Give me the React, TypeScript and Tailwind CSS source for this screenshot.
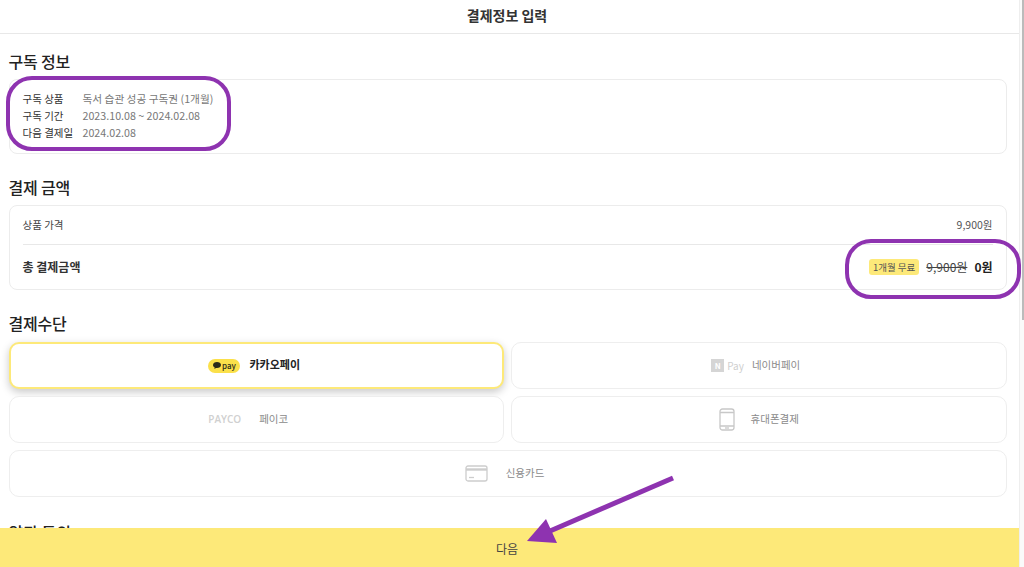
import React from "react";

const font = "font-['Noto_Sans_CJK_KR','Noto_Sans',sans-serif]";

function Section({ title, children }: { title: string; children: React.ReactNode }) {
  return (
    <section>
      <h2 className="h-[26px] text-[16px] leading-[26px] font-medium text-[#222] tracking-[-0.2px]">{title}</h2>
      {children}
    </section>
  );
}

function InfoRow({ label, value }: { label: string; value: string }) {
  return (
    <div className="flex h-[17px] items-center text-[10.5px]">
      <span className="w-[60px] text-[#333]">{label}</span>
      <span className="text-[10.7px] text-[#777]">{value}</span>
    </div>
  );
}

function PayButton({ children, label, active, className }: { children: React.ReactNode; label: string; active?: boolean; className?: string }) {
  return (
    <div
      className={
        "flex h-[47px] items-center justify-center rounded-[10px] bg-white " +
        (active
          ? "border-2 border-[#fde979] shadow-[0_3px_8px_rgba(0,0,0,0.22)] "
          : "border border-[#eeeeee] ") +
        (className ?? "")
      }
    >
      {children}
      <span className={"mb-[2px] " + (active ? "text-[11px] font-bold text-[#222]" : "text-[10.5px] text-[#8a8a8a]")}>{label}</span>
    </div>
  );
}

export default function App() {
  return (
    <div className={"relative flex h-[567px] w-[1024px] overflow-hidden bg-white " + font}>
      <div className="flex h-full w-[1019px] flex-col">
        <header className="flex h-[34px] shrink-0 items-center justify-center border-b border-[#e8e8e8] pr-[5px] pb-[3px]">
          <h1 className="text-[14px] font-bold text-[#333]">결제정보 입력</h1>
        </header>

        <main className="flex min-h-0 flex-1 flex-col overflow-hidden pl-[8.5px] pr-[12.5px] pt-[14px]">
          <Section title="구독 정보">
            <div className="mt-[5px] flex h-[75px] flex-col justify-center rounded-[8px] border border-[#ececec] px-[13px] pb-[1px]">
              <InfoRow label="구독 상품" value="독서 습관 성공 구독권 (1개월)" />
              <InfoRow label="구독 기간" value="2023.10.08 ~ 2024.02.08" />
              <InfoRow label="다음 결제일" value="2024.02.08" />
            </div>
          </Section>

          <div className="mt-[20px]">
            <Section title="결제 금액">
              <div className="mt-[5px] h-[85px] rounded-[8px] border border-[#ececec] px-[13px]">
                <div className="flex h-[39px] items-center justify-between border-b border-[#e8e8e8] text-[10.5px]">
                  <span className="text-[#444]">상품 가격</span>
                  <span className="text-[#555]">9,900원</span>
                </div>
                <div className="flex h-[44px] items-center justify-between">
                  <span className="text-[12px] font-bold text-[#333]">총 결제금액</span>
                  <div className="flex items-center">
                    <span className="rounded-[3px] bg-[#fde979] px-[4px] py-[2px] text-[9.5px] leading-[12px] text-[#555]">1개월 무료</span>
                    <span className="ml-[7px] text-[12px] text-[#444] line-through">9,900원</span>
                    <span className="ml-[7px] text-[12px] font-bold text-[#222]">0원</span>
                  </div>
                </div>
              </div>
            </Section>
          </div>

          <div className="mt-[20px]">
            <Section title="결제수단">
              <div className="mt-[6px] grid grid-cols-2 gap-x-[7px] gap-y-[7px]">
                <PayButton label="카카오페이" active className="pr-[4px]">
                  <span className="mr-[9px] flex h-[14px] w-[32px] items-center justify-center gap-[1px] rounded-full bg-[#fbe04a]">
                    <svg width="8" height="7" viewBox="0 0 8 7">
                      <path d="M4 0C1.800 0 0 1.200 0 3c0 1.100.7 2 1.700 2.500L1.400 7l1.600-1h1c2.200 0 4-1.300 4-3S6.200 0 4 0z" fill="#2a2a1a" />
                    </svg>
                    <span className="text-[8px] leading-none font-medium text-[#2a2a1a]">pay</span>
                  </span>
                </PayButton>
                <PayButton label="네이버페이" className="pr-[6px]">
                  <span className="mr-[8px] flex items-center gap-[3px]">
                    <span className="flex h-[13px] w-[13px] items-center justify-center bg-[#d5d5d5] text-[8px] leading-none font-bold text-white">N</span>
                    <span className="text-[10px] leading-none text-[#cfcfcf]">Pay</span>
                  </span>
                </PayButton>
                <PayButton label="페이코" className="pr-[16px]">
                  <span className="mr-[18px] font-['Open_Sans',sans-serif] text-[10px] font-semibold text-[#d0d0d0]">PAYCO</span>
                </PayButton>
                <PayButton label="휴대폰결제">
                  <svg className="mr-[16px]" width="16" height="23" viewBox="0 0 16 23" fill="none" stroke="#c8c8c8" strokeWidth="1.300">
                    <rect x="1" y="1" width="14" height="21" rx="2.500" />
                    <path d="M1 4.500h14M1 18h14" />
                    <path d="M6 20h4" />
                  </svg>
                </PayButton>
                <PayButton label="신용카드" className="col-span-2 pr-[6px]">
                  <svg className="mr-[18px]" width="23" height="17" viewBox="0 0 23 17" fill="none" stroke="#cdcdcd" strokeWidth="1.300">
                    <rect x="1" y="1" width="21" height="15" rx="2" />
                    <path d="M1 4.500h21" strokeWidth="2.400" />
                    <path d="M4 12.500h5" />
                  </svg>
                </PayButton>
              </div>
            </Section>
          </div>

          <h2 className="mt-[22px] text-[16px] leading-[26px] font-medium text-[#222]">약관 동의</h2>
        </main>

        <div className="absolute bottom-0 left-0 flex h-[39px] w-[1019px] items-center justify-center bg-[#fde979] pr-[5px] pt-[2px]">
          <span className="text-[12px] text-[#444]">다음</span>
        </div>
      </div>

      <div className="h-full w-[5px] border-l border-[#eeeeee] bg-[#fafafa]">
        <div className="ml-auto h-[320px] w-[2px] bg-[#bbbbbb]" />
      </div>

      {/* annotation marks drawn over the page */}
      <div className="pointer-events-none absolute left-[6px] top-[76px] h-[75px] w-[225px] rounded-[26px] border-[4.5px] border-[#8e33b0]" />
      <div className="pointer-events-none absolute left-[845px] top-[239px] h-[60px] w-[176px] rounded-[26px] border-[4.5px] border-[#8e33b0]" />
      <svg className="pointer-events-none absolute left-[520px] top-[470px]" width="160" height="80" viewBox="0 0 160 80">
        <path d="M153 8L30 61" stroke="#8e33b0" strokeWidth="5" fill="none" />
        <path d="M7 71L26 49L37 73z" fill="#8e33b0" />
      </svg>
    </div>
  );
}
